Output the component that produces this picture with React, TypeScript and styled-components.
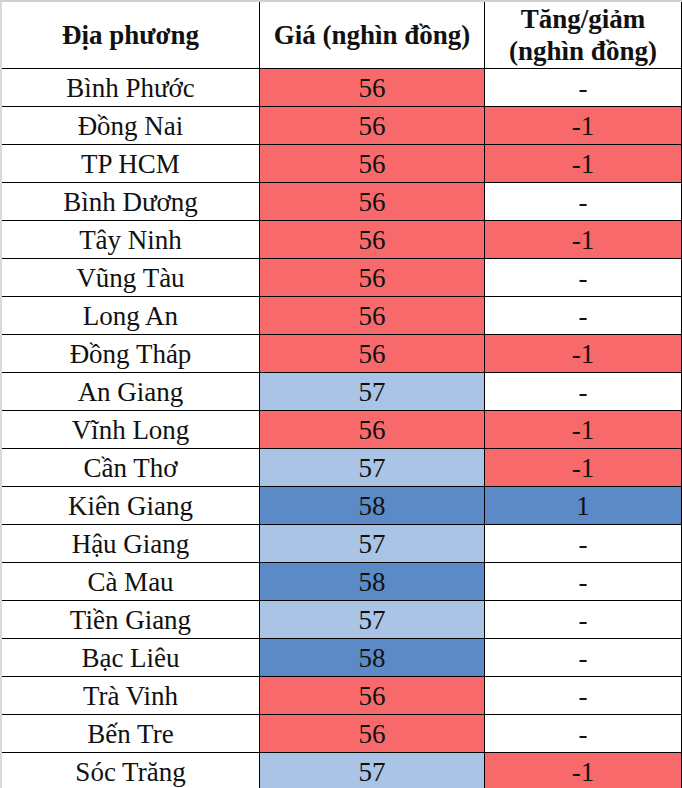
import styled, {createGlobalStyle} from "styled-components"

const GlobalStyle = createGlobalStyle`
    html, body {
        margin: 0;
        padding: 0;
        background: #ffffff;
    }
`

type Tone = "red" | "light" | "dark" | "none"

const toneColor: Record<Tone, string> = {
    red: "#f8696b",
    light: "#a9c4e5",
    dark: "#5b8ac7",
    none: "#ffffff",
}

const Frame = styled.div`
    width: 682px;
    height: 788px;
    overflow: hidden;
    box-sizing: border-box;
    border-top: 2px solid #cfcfcf;
    border-left: 2px solid #d8d8d8;
    font-family: "Liberation Serif", "Times New Roman", serif;
    color: #111;
`

const Grid = styled.div`
    display: grid;
    grid-template-columns: 258px 225px 197px;
    grid-template-rows: 67px;
    grid-auto-rows: 38px;
`

const Cell = styled.div<{$tone?: Tone}>`
    box-sizing: border-box;
    border-right: 1px solid #000;
    border-bottom: 1px solid #000;
    background: ${p => toneColor[p.$tone || "none"]};
    display: flex;
    align-items: center;
    justify-content: center;
    font-family: "Liberation Serif", "Times New Roman", serif;
    font-size: 27px;
    line-height: 1;
    padding-top: 2px;
`

const HeadCell = styled(Cell)`
    font-weight: bold;
    flex-direction: column;
    font-size: 27px;
    line-height: 32px;
    text-align: center;
    padding-top: 0;
`

type Row = [string, number, Tone, string, Tone]

const rows: Row[] = [
    ["Bình Phước", 56, "red", "-", "none"],
    ["Đồng Nai", 56, "red", "-1", "red"],
    ["TP HCM", 56, "red", "-1", "red"],
    ["Bình Dương", 56, "red", "-", "none"],
    ["Tây Ninh", 56, "red", "-1", "red"],
    ["Vũng Tàu", 56, "red", "-", "none"],
    ["Long An", 56, "red", "-", "none"],
    ["Đồng Tháp", 56, "red", "-1", "red"],
    ["An Giang", 57, "light", "-", "none"],
    ["Vĩnh Long", 56, "red", "-1", "red"],
    ["Cần Thơ", 57, "light", "-1", "red"],
    ["Kiên Giang", 58, "dark", "1", "dark"],
    ["Hậu Giang", 57, "light", "-", "none"],
    ["Cà Mau", 58, "dark", "-", "none"],
    ["Tiền Giang", 57, "light", "-", "none"],
    ["Bạc Liêu", 58, "dark", "-", "none"],
    ["Trà Vinh", 56, "red", "-", "none"],
    ["Bến Tre", 56, "red", "-", "none"],
    ["Sóc Trăng", 57, "light", "-1", "red"],
]

export default function App() {
    return (
        <>
            <GlobalStyle />
            <Frame>
                <Grid>
                    <HeadCell>Địa phương</HeadCell>
                    <HeadCell>Giá (nghìn đồng)</HeadCell>
                    <HeadCell>
                        <span>Tăng/giảm</span>
                        <span>(nghìn đồng)</span>
                    </HeadCell>
                    {
                        rows.flatMap((row) => [
                            <Cell key={row[0] + "a"}>{row[0]}</Cell>,
                            <Cell key={row[0] + "b"} $tone={row[2]}>{row[1]}</Cell>,
                            <Cell key={row[0] + "c"} $tone={row[4]}>{row[3]}</Cell>,
                        ])
                    }
                </Grid>
            </Frame>
        </>
    )
}
